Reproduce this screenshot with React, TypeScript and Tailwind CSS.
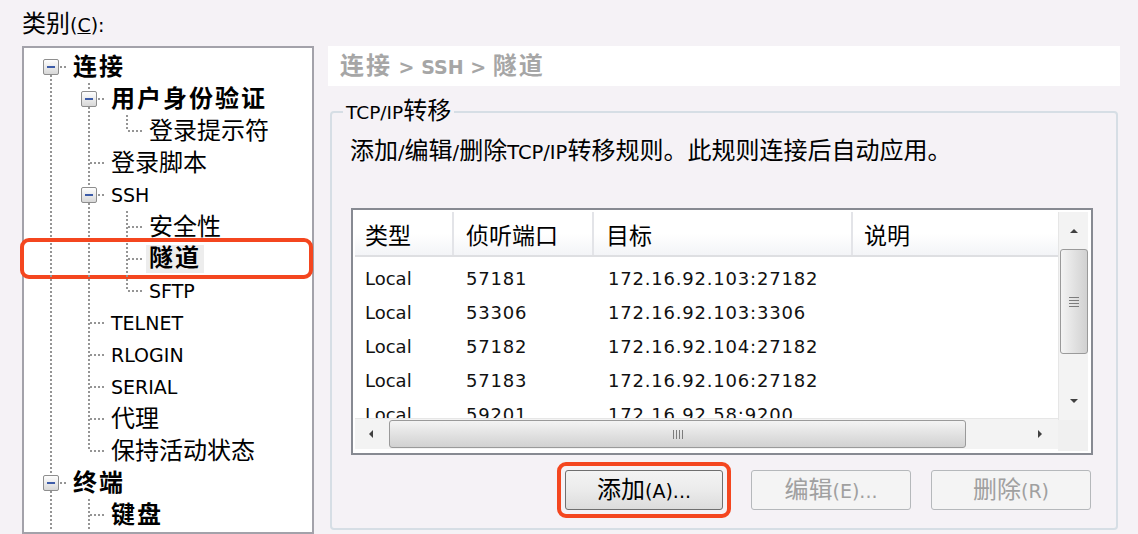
import React from 'react';

// CJK runs are drawn a bit larger than the latin text, like the original dialog font
const CJK = /([\u2e80-\u9fff\u3000-\u303f\uff00-\uffef]+)/;

function Mixed({ text, cjk = 'text-[24px]' }: { text: string; cjk?: string }) {
    return (
        <span>
            {text.split(CJK).filter(Boolean).map((part, i) =>
                CJK.test(part) ? <span key={i} className={cjk}>{part}</span> : <span key={i}>{part}</span>
            )}
        </span>
    );
}

type TreeRow = {
    label: string;
    level: number;
    guides: boolean[];
    last?: boolean;
    first?: boolean;
    box?: boolean;
    bold?: boolean;
    selected?: boolean;
};

const treeRows: TreeRow[] = [
    { label: '连接', level: 0, guides: [], first: true, box: true, bold: true },
    { label: '用户身份验证', level: 1, guides: [true], box: true, bold: true },
    { label: '登录提示符', level: 2, guides: [true, true], last: true },
    { label: '登录脚本', level: 1, guides: [true] },
    { label: 'SSH', level: 1, guides: [true], box: true },
    { label: '安全性', level: 2, guides: [true, true] },
    { label: '隧道', level: 2, guides: [true, true], bold: true, selected: true },
    { label: 'SFTP', level: 2, guides: [true, true], last: true },
    { label: 'TELNET', level: 1, guides: [true] },
    { label: 'RLOGIN', level: 1, guides: [true] },
    { label: 'SERIAL', level: 1, guides: [true] },
    { label: '代理', level: 1, guides: [true] },
    { label: '保持活动状态', level: 1, guides: [true], last: true },
    { label: '终端', level: 0, guides: [], box: true, bold: true },
    { label: '键盘', level: 1, guides: [true], bold: true },
];

const DOT = { stroke: '#959595', strokeWidth: 2, strokeDasharray: '2 2' };

function Guide({ line }: { line: boolean }) {
    return (
        <svg width="38" height="32" className="shrink-0">
            {line && <line x1="19" y1="0" x2="19" y2="32" {...DOT} />}
        </svg>
    );
}

function Joint({ row, id }: { row: TreeRow; id: number }) {
    return (
        <svg width="38" height="32" className="shrink-0">
            <defs>
                <linearGradient id={`exp${id}`} x1="0" y1="0" x2="0" y2="1">
                    <stop offset="0" stopColor="#ffffff" />
                    <stop offset="1" stopColor="#d6d6d6" />
                </linearGradient>
            </defs>
            {!row.first && <line x1="19" y1="0" x2="19" y2={row.box ? 8 : 16} {...DOT} />}
            {!row.last && <line x1="19" y1={row.box ? 24 : 16} x2="19" y2="32" {...DOT} />}
            <line x1={row.box ? 28 : 20} y1="16" x2="36" y2="16" {...DOT} />
            {row.box && (
                <>
                    <rect x="11.5" y="8.5" width="15" height="15" rx="1.5" fill={`url(#exp${id})`} stroke="#8e8e8e" />
                    <rect x="15" y="15" width="8" height="2" fill="#3d5ca8" />
                </>
            )}
        </svg>
    );
}

function Tree() {
    return (
        <div className="flex-1 border-2 border-[#a3a2aa] bg-white pt-[3px]">
            {treeRows.map((row, i) => (
                <div key={i} className="relative flex h-[32px] items-center pl-[8px]">
                    {row.guides.map((g, j) => <Guide key={j} line={g} />)}
                    <Joint row={row} id={i} />
                    <span
                        className={
                            'whitespace-nowrap text-[19px] text-black ' +
                            (row.bold ? 'font-bold ' : '') +
                            (row.selected ? 'bg-[#ededed] px-[3px] leading-[27px]' : 'ml-[3px] leading-[32px]')
                        }
                    >
                        <Mixed text={row.label} cjk={row.bold ? 'text-[24px] tracking-[2px]' : 'text-[24px]'} />
                    </span>
                    {/* red annotation around the selected node */}
                    {row.selected && (
                        <div className="pointer-events-none absolute -top-[5px] -bottom-[4px] -left-[4px] -right-[1px] rounded-[9px] border-4 border-[#f4461f]" />
                    )}
                </div>
            ))}
        </div>
    );
}

const rules = [
    ['Local', '57181', '172.16.92.103:27182', ''],
    ['Local', '53306', '172.16.92.103:3306', ''],
    ['Local', '57182', '172.16.92.104:27182', ''],
    ['Local', '57183', '172.16.92.106:27182', ''],
    ['Local', '59201', '172.16.92.58:9200', ''],
];

const cols = [
    { title: '类型', cls: 'w-[97px] pl-[10px]' },
    { title: '侦听端口', cls: 'w-[140px] pl-[12px]' },
    { title: '目标', cls: 'w-[259px] pl-[12px]' },
    { title: '说明', cls: 'w-[207px] pl-[11px]' },
];

function Arrow({ dir }: { dir: 'up' | 'down' | 'left' | 'right' }) {
    const pts = {
        up: '1,6 5,2 9,6',
        down: '1,2 5,6 9,2',
        left: '6,1 2,5 6,9',
        right: '3,1 7,5 3,9',
    }[dir];
    return (
        <svg width="10" height="10" viewBox="0 0 10 10">
            <polygon points={pts} fill="#404040" />
        </svg>
    );
}

function ListView() {
    return (
        <div className="ml-[1px] mt-[40px] border-2 border-[#878a92] bg-white p-[2px]">
            <div className="flex">
                <div className="flex w-[703px] flex-col">
                    {/* header */}
                    <div className="flex h-[45px] border-b-2 border-[#dedfe2] bg-[linear-gradient(to_bottom,#ffffff_0%,#ffffff_50%,#f3f4f7_100%)]">
                        {cols.map((c, i) => (
                            <div
                                key={i}
                                className={
                                    c.cls +
                                    ' flex items-center pt-[5px] border-[#e3e4e8] ' +
                                    (i > 0 ? 'border-l-2 ' : '') +
                                    (i === cols.length - 1 ? 'flex-1' : 'shrink-0')
                                }
                            >
                                <span className="text-[23px] leading-none text-black">{c.title}</span>
                            </div>
                        ))}
                    </div>
                    {/* rows */}
                    <div className="h-[161px] overflow-hidden pt-[4px]">
                        {rules.map((r, i) => (
                            <div key={i} className="flex h-[34px] items-center text-[18px] text-[#111]">
                                {r.map((v, j) => (
                                    <div
                                        key={j}
                                        className={
                                            cols[j].cls +
                                            (j > 0 ? ' ml-[2px] tracking-[0.8px]' : '') +
                                            ' shrink-0 whitespace-nowrap'
                                        }
                                    >
                                        {v}
                                    </div>
                                ))}
                            </div>
                        ))}
                    </div>
                    {/* horizontal scrollbar */}
                    <div className="flex h-[31px] items-center border-t border-[#e6e6e6] bg-[#f3f3f3]">
                        <div className="flex w-[34px] justify-center"><Arrow dir="left" /></div>
                        <div className="flex h-[28px] w-[577px] items-center justify-center rounded-[3px] border border-[#9a9a9a] bg-[linear-gradient(to_bottom,#f4f4f4,#e2e2e2_50%,#d1d1d1)]">
                            <div className="flex gap-[2px]">
                                <div className="h-[9px] w-px bg-[#7c7c7c]" />
                                <div className="h-[9px] w-px bg-[#7c7c7c]" />
                                <div className="h-[9px] w-px bg-[#7c7c7c]" />
                                <div className="h-[9px] w-px bg-[#7c7c7c]" />
                            </div>
                        </div>
                        <div className="flex-1" />
                        <div className="flex w-[36px] justify-center"><Arrow dir="right" /></div>
                    </div>
                </div>
                {/* vertical scrollbar */}
                <div className="flex w-[30px] flex-col">
                    <div className="flex h-[208px] flex-col items-center border-l border-[#e6e6e6] bg-[#f3f3f3]">
                        <div className="flex h-[37px] items-center pt-[3px]"><Arrow dir="up" /></div>
                        <div className="flex h-[105px] w-[28px] items-center justify-center rounded-[3px] border border-[#9a9a9a] bg-[linear-gradient(to_right,#f4f4f4,#e2e2e2_50%,#d1d1d1)]">
                            <div className="flex flex-col gap-[2px]">
                                <div className="h-px w-[10px] bg-[#7c7c7c]" />
                                <div className="h-px w-[10px] bg-[#7c7c7c]" />
                                <div className="h-px w-[10px] bg-[#7c7c7c]" />
                                <div className="h-px w-[10px] bg-[#7c7c7c]" />
                            </div>
                        </div>
                        <div className="flex-1" />
                        <div className="flex h-[36px] items-center"><Arrow dir="down" /></div>
                    </div>
                    <div className="h-[31px] bg-[#f0f0f0]" />
                </div>
            </div>
        </div>
    );
}

function Btn({ label, disabled }: { label: string; disabled?: boolean }) {
    return (
        <button
            className={
                'flex h-[40px] items-center justify-center rounded-[3px] border text-[19px] ' +
                (disabled
                    ? 'w-[160px] border-[#b5b8bb] bg-[#f4f4f4] text-[#a0a0a0]'
                    : 'w-[158px] border-[#6f6f6f] bg-[linear-gradient(to_bottom,#f3f3f3,#ebebeb_50%,#dcdcdc)] text-black')
            }
        >
            <Mixed text={label} />
        </button>
    );
}

export default function App() {
    return (
        <div className="flex h-[534px] w-[1138px] overflow-hidden bg-[#f5f2f6] pl-[22px] font-['DejaVu_Sans','Noto_Sans_CJK_SC',sans-serif] text-black">
            {/* left: category tree */}
            <div className="flex w-[292px] shrink-0 flex-col">
                <div className="h-[46px] shrink-0 pt-[9px] text-[19px] leading-[30px]">
                    <span className="text-[24px]">类别</span>(<span className="underline">C</span>):
                </div>
                <Tree />
            </div>

            {/* right: tunnel settings */}
            <div className="ml-[14px] mt-[46px] flex w-[792px] flex-col">
                <div className="flex h-[40px] shrink-0 items-center bg-white pl-[12px] text-[19px] font-bold text-[#a6a6a6]">
                    <Mixed text="连接 > SSH > 隧道" cjk="text-[24px] tracking-[2px]" />
                </div>

                <fieldset className="mx-[2px] mt-[11px] rounded-[4px] border-2 border-[#d6dee5] pl-[18px] pr-[23px] pb-[10px]">
                    <legend className="-ml-[7px] px-[3px] text-[18.5px] leading-[28px]">
                        <Mixed text="TCP/IP转移" />
                    </legend>
                    <div className="mt-[9px] text-[19.5px] leading-[30px]">
                        <Mixed text="添加/编辑/删除TCP/IP转移规则。此规则连接后自动应用。" />
                    </div>

                    <ListView />

                    <div className="mt-[7px] flex items-center justify-end gap-[20px] pr-[2px]">
                        <div className="rounded-[9px] border-4 border-[#f4461f] p-[4px]">
                            <Btn label="添加(A)..." />
                        </div>
                        <Btn label="编辑(E)..." disabled />
                        <Btn label="删除(R)" disabled />
                    </div>
                </fieldset>
            </div>
        </div>
    );
}
